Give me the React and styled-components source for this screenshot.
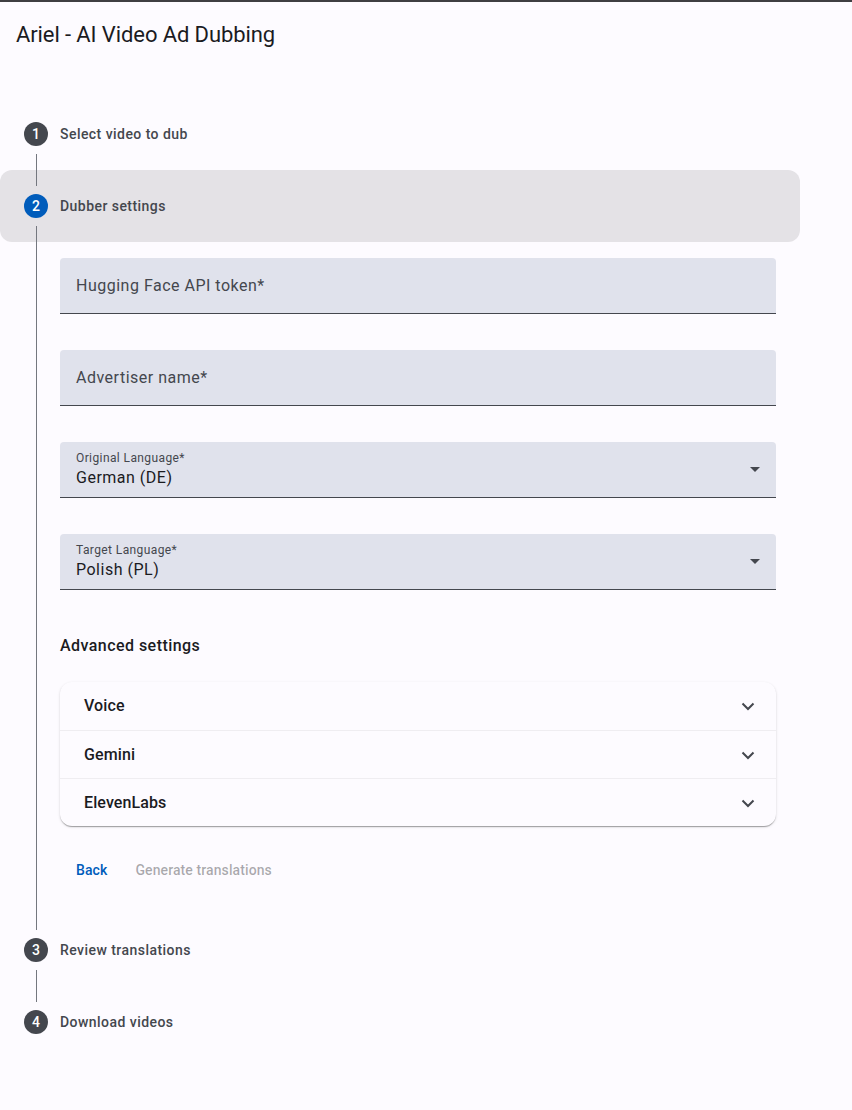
import React from "react";
import styled, { createGlobalStyle } from "styled-components";

const GlobalStyle = createGlobalStyle`
  html, body {
    margin: 0;
    padding: 0;
    background: #fdfbff;
  }
  body {
    font-family: Roboto, "Liberation Sans", Arial, sans-serif;
    color: #1b1b1f;
  }
`;

const Page = styled.div`
  min-height: 1110px;
  border-top: 2px solid #3f3f42;
  box-sizing: border-box;
  background: #fdfbff;
`;

const Toolbar = styled.header`
  height: 64px;
  display: flex;
  align-items: center;
  padding: 0 16px;
`;

const Title = styled.h1`
  margin: 0;
  font-size: 22px;
  font-weight: 400;
  letter-spacing: -0.1px;
  color: #1b1b1f;
`;

const Stepper = styled.div`
  width: 800px;
  margin-top: 32px;
  display: flex;
  flex-direction: column;
`;

const StepHeader = styled.div`
  position: relative;
  height: 72px;
  box-sizing: border-box;
  padding: 0 24px;
  display: flex;
  align-items: center;
  border-radius: 12px;
  background: ${(p) => (p.$selected ? "#e4e2e6" : "transparent")};

  &::before,
  &::after {
    content: "";
    position: absolute;
    left: 36px;
    width: 1px;
    height: 16px;
    background: #74777f;
  }
  &::before {
    top: 0;
    display: ${(p) => (p.$first ? "none" : "block")};
  }
  &::after {
    bottom: 0;
    display: ${(p) => (p.$last ? "none" : "block")};
  }
`;

const StepIcon = styled.div`
  width: 24px;
  height: 24px;
  border-radius: 50%;
  background: ${(p) => (p.$selected ? "#005cbb" : "#44474e")};
  color: #ffffff;
  font-size: 14px;
  font-weight: 500;
  display: flex;
  align-items: center;
  justify-content: center;
`;

const StepLabel = styled.div`
  margin-left: 12px;
  font-size: 14px;
  font-weight: 500;
  letter-spacing: 0.45px;
  color: #44474e;
`;

const StepContent = styled.div`
  margin-left: 36px;
  border-left: 1px solid #74777f;
  padding: 16px 24px 24px 23px;
`;

const Fields = styled.div`
  display: flex;
  flex-direction: column;
  gap: 36px;
`;

const Field = styled.div`
  position: relative;
  height: 56px;
  box-sizing: border-box;
  background: #e0e2ec;
  border-radius: 4px 4px 0 0;
  border-bottom: 1px solid #44474e;
  padding: ${(p) => (p.$filled ? "8px 40px 0 16px" : "0 16px")};
  display: flex;
  flex-direction: column;
  justify-content: ${(p) => (p.$filled ? "flex-start" : "center")};
`;

const Placeholder = styled.span`
  font-size: 16px;
  letter-spacing: 0.5px;
  color: #44474e;
  line-height: 24px;
`;

const FloatLabel = styled.span`
  font-size: 12px;
  line-height: 16px;
  letter-spacing: 0.4px;
  color: #44474e;
`;

const Value = styled.span`
  font-size: 16px;
  line-height: 24px;
  letter-spacing: 0.5px;
  color: #1b1b1f;
`;

const Arrow = styled.span`
  position: absolute;
  right: 16px;
  top: 25px;
  width: 0;
  height: 0;
  border-left: 5px solid transparent;
  border-right: 5px solid transparent;
  border-top: 5px solid #44474e;
`;

const SectionTitle = styled.h3`
  margin: 44px 0 24px;
  font-size: 16px;
  line-height: 24px;
  font-weight: 500;
  letter-spacing: 0.45px;
  color: #1b1b1f;
`;

const Accordion = styled.div`
  border-radius: 12px;
  background: #fdfbff;
  box-shadow: 0 2px 1px -1px rgba(0, 0, 0, 0.2), 0 1px 1px 0 rgba(0, 0, 0, 0.14),
    0 1px 3px 0 rgba(0, 0, 0, 0.12);
  overflow: hidden;
`;

const Panel = styled.div`
  height: 48px;
  box-sizing: border-box;
  padding: 0 16px 0 24px;
  display: flex;
  align-items: center;
  justify-content: space-between;
  border-top: ${(p) => (p.$first ? "none" : "1px solid #efedf1")};
`;

const PanelTitle = styled.span`
  font-size: 16px;
  font-weight: 500;
  letter-spacing: 0.1px;
  color: #1b1b1f;
  margin-top: -1px;
`;

const Actions = styled.div`
  display: flex;
  gap: 4px;
  margin-top: 24px;
  padding-left: 4px;
`;

const TextButton = styled.button`
  height: 40px;
  padding: 0 12px;
  border: none;
  background: transparent;
  font-family: inherit;
  font-size: 14px;
  font-weight: 500;
  letter-spacing: 0.1px;
  color: ${(p) => (p.disabled ? "rgba(27, 27, 31, 0.38)" : "#005cbb")};
  cursor: ${(p) => (p.disabled ? "default" : "pointer")};
`;

const Chevron = () => (
  <svg width="24" height="24" viewBox="0 0 24 24" fill="none">
    <path d="M6.5 9.5l5.5 5.5 5.5-5.5" stroke="#44474e" strokeWidth="2" />
  </svg>
);

const steps = [
  "Select video to dub",
  "Dubber settings",
  "Review translations",
  "Download videos",
];

const Settings = () => (
  <StepContent>
    <Fields>
      <Field>
        <Placeholder>Hugging Face API token*</Placeholder>
      </Field>
      <Field>
        <Placeholder>Advertiser name*</Placeholder>
      </Field>
      <Field $filled>
        <FloatLabel>Original Language*</FloatLabel>
        <Value>German (DE)</Value>
        <Arrow />
      </Field>
      <Field $filled>
        <FloatLabel>Target Language*</FloatLabel>
        <Value>Polish (PL)</Value>
        <Arrow />
      </Field>
    </Fields>
    <SectionTitle>Advanced settings</SectionTitle>
    <Accordion>
      {["Voice", "Gemini", "ElevenLabs"].map((name, i) => (
        <Panel key={name} $first={i === 0}>
          <PanelTitle>{name}</PanelTitle>
          <Chevron />
        </Panel>
      ))}
    </Accordion>
    <Actions>
      <TextButton>Back</TextButton>
      <TextButton disabled>Generate translations</TextButton>
    </Actions>
  </StepContent>
);

export default function App() {
  const active = 1;
  return (
    <Page>
      <GlobalStyle />
      <Toolbar>
        <Title>Ariel - AI Video Ad Dubbing</Title>
      </Toolbar>
      <Stepper>
        {steps.map((label, i) => (
          <React.Fragment key={label}>
            <StepHeader
              $selected={i === active}
              $first={i === 0}
              $last={i === steps.length - 1}
            >
              <StepIcon $selected={i === active}>{i + 1}</StepIcon>
              <StepLabel>{label}</StepLabel>
            </StepHeader>
            {i === active && <Settings />}
          </React.Fragment>
        ))}
      </Stepper>
    </Page>
  );
}
